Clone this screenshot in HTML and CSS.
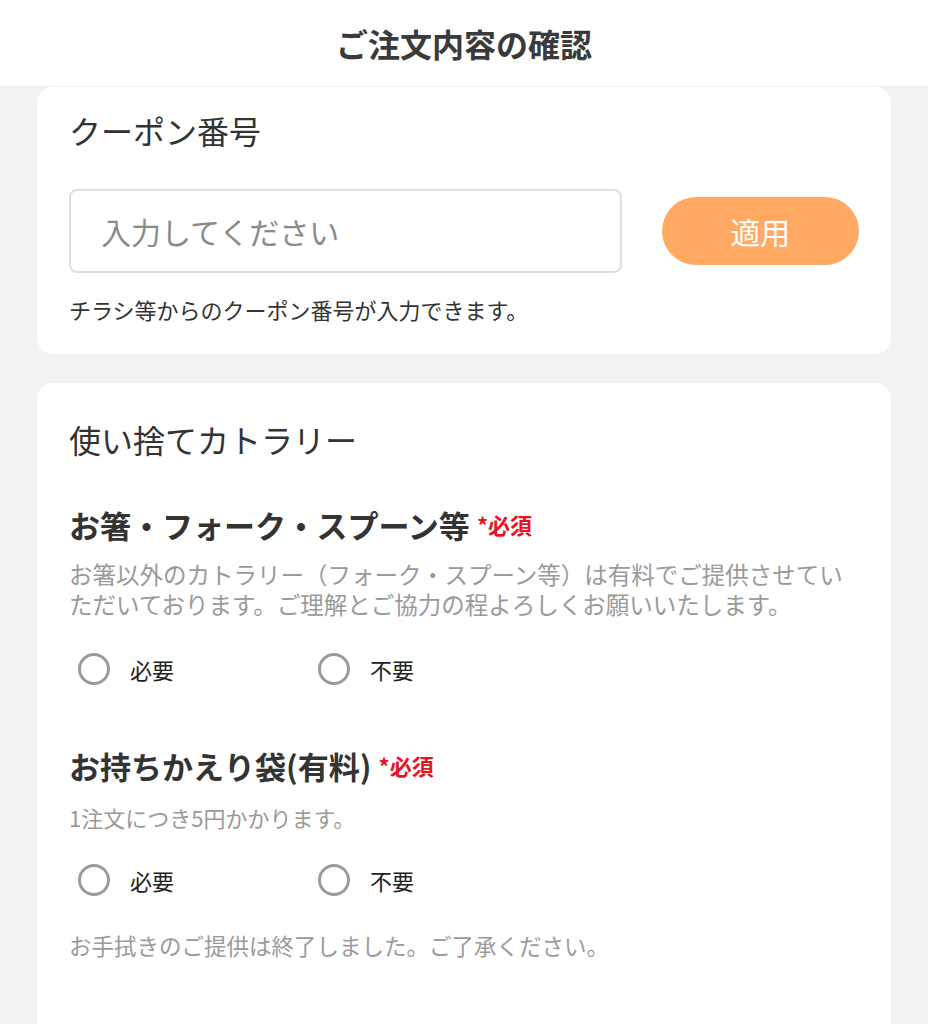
FILE: index.html
```html
<!DOCTYPE html>
<html lang="ja">
<head>
<meta charset="utf-8">
<title>ご注文内容の確認</title>
<link rel="stylesheet" href="styles.css">
</head>
<body>
<header class="topbar"><h1 class="topbar-title">ご注文内容の確認</h1></header>
<main class="page">
  <section class="card card-coupon">
    <h2 class="card-title">クーポン番号</h2>
    <div class="coupon-row">
      <input class="coupon-input" type="text" placeholder="入力してください">
      <button class="apply-btn" type="button">適用</button>
    </div>
    <p class="hint">チラシ等からのクーポン番号が入力できます。</p>
  </section>
  <section class="card card-cutlery">
    <h2 class="card-title">使い捨てカトラリー</h2>
    <div class="field field-first">
      <h3 class="field-title">お箸・フォーク・スプーン等 <span class="req">*必須</span></h3>
      <p class="field-desc"><span class="desc-line">お箸以外のカトラリー（フォーク・スプーン等）は有料でご提供させてい</span><span class="desc-line">ただいております。ご理解とご協力の程よろしくお願いいたします。</span></p>
      <div class="radio-row">
        <label class="radio"><span class="radio-circle"></span><span class="radio-label">必要</span></label>
        <label class="radio"><span class="radio-circle"></span><span class="radio-label">不要</span></label>
      </div>
    </div>
    <div class="field field-second">
      <h3 class="field-title">お持ちかえり袋(有料) <span class="req">*必須</span></h3>
      <p class="field-desc field-desc-short">1注文につき5円かかります。</p>
      <div class="radio-row">
        <label class="radio"><span class="radio-circle"></span><span class="radio-label">必要</span></label>
        <label class="radio"><span class="radio-circle"></span><span class="radio-label">不要</span></label>
      </div>
    </div>
    <p class="footnote">お手拭きのご提供は終了しました。ご了承ください。</p>
  </section>
</main>
</body>
</html>
```
FILE: styles.css
```css
* { box-sizing: border-box; }
html, body {
  margin: 0;
  padding: 0;
}
body {
  background: #f2f2f2;
  font-family: "Noto Sans CJK JP", "Noto Sans", sans-serif;
  color: #333;
  height: 1024px;
  overflow: hidden;
}
.topbar {
  background: #fff;
  height: 86px;
  display: flex;
  align-items: center;
  justify-content: center;
}
.topbar-title {
  margin: 0;
  font-size: 32px;
  line-height: 40px;
  font-weight: 700;
  color: #3a3a3a;
}
.page {
  padding: 1px 37px 0;
}
.card {
  background: #fff;
  border-radius: 16px;
  padding: 0 32px;
}
.card-coupon {
  padding-top: 23px;
  padding-bottom: 30px;
}
.card-cutlery {
  margin-top: 29px;
  padding-top: 36px;
  padding-bottom: 80px;
}
.card-title {
  margin: 0;
  font-size: 32px;
  line-height: 40px;
  font-weight: 400;
  color: #333;
}
.coupon-row {
  margin-top: 39px;
  display: flex;
  align-items: center;
  gap: 40px;
}
.coupon-input {
  width: 554px;
  height: 84px;
  border: 2px solid #dedede;
  border-radius: 8px;
  padding: 0 30px;
  font-family: inherit;
  font-size: 30px;
  color: #333;
  outline: none;
  background: #fff;
}
.coupon-input::placeholder {
  color: #8a8a8a;
}
.apply-btn {
  width: 198px;
  height: 68px;
  border: none;
  border-radius: 34px;
  background: #ffa963;
  color: #fff;
  font-family: inherit;
  font-size: 30px;
  padding: 0;
}
.hint {
  margin: 21px 0 0;
  font-size: 22px;
  line-height: 30px;
  color: #333;
}
.field-first { margin-top: 45px; }
.field-second { margin-top: 56px; }
.field-title {
  margin: 0;
  font-size: 31px;
  line-height: 40px;
  font-weight: 700;
  color: #333;
}
.req {
  color: #e8131f;
  font-size: 22px;
  font-weight: 700;
  vertical-align: 4px;
}
.field-desc {
  margin: 14px 0 0;
  font-size: 23.5px;
  line-height: 30px;
  color: #9a9a9a;
}
.desc-line {
  display: block;
  height: 30px;
  white-space: nowrap;
}
.field-desc-short {
  margin-top: 16px;
  font-size: 22px;
}
.radio-row {
  display: flex;
  margin-top: 30px;
  padding-left: 9px;
}
.field-second .radio-row { margin-top: 28px; }
.radio {
  width: 240px;
  height: 40px;
  display: flex;
  align-items: center;
  gap: 20px;
}
.radio-circle {
  width: 32px;
  height: 32px;
  border: 3px solid #9a9a9a;
  border-radius: 50%;
  flex: none;
}
.radio-label {
  font-size: 22px;
  line-height: 30px;
  color: #222;
}
.footnote {
  margin: 30px 0 0;
  font-size: 22.5px;
  line-height: 30px;
  color: #9a9a9a;
}
```
